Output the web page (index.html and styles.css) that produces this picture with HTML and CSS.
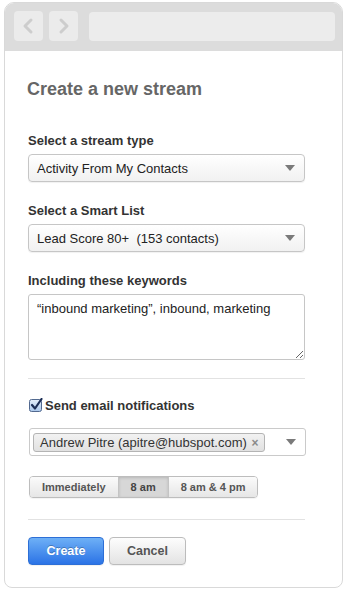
FILE: index.html
```html
<!DOCTYPE html>
<html lang="en">

<head>
    <meta charset="UTF-8">
    <title>Create a new stream</title>
    <link rel="stylesheet" href="styles.css">
</head>

<body>
    <div class="window">
        <div class="toolbar">
            <div class="nav-btn">
                <svg width="29" height="30" viewBox="0 0 29 30">
                    <path d="M17 9 L11 15 L17 21" fill="none" stroke="#cdcdcd" stroke-width="3" stroke-linecap="round" stroke-linejoin="round" />
                </svg>
            </div>
            <div class="nav-btn">
                <svg width="29" height="30" viewBox="0 0 29 30">
                    <path d="M12 9 L18 15 L12 21" fill="none" stroke="#cdcdcd" stroke-width="3" stroke-linecap="round" stroke-linejoin="round" />
                </svg>
            </div>
            <div class="address"></div>
        </div>

        <div class="content">
            <h1>Create a new stream</h1>

            <div class="field">
                <label>Select a stream type</label>
                <div class="select">
                    <span>Activity From My Contacts</span>
                    <svg class="caret" width="10" height="6" viewBox="0 0 10 6"><path d="M0 0 H10 L5 6 Z" fill="#7a7a7a" /></svg>
                </div>
            </div>

            <div class="field">
                <label>Select a Smart List</label>
                <div class="select">
                    <span>Lead Score 80+&nbsp; (153 contacts)</span>
                    <svg class="caret" width="10" height="6" viewBox="0 0 10 6"><path d="M0 0 H10 L5 6 Z" fill="#7a7a7a" /></svg>
                </div>
            </div>

            <div class="field last">
                <label>Including these keywords</label>
                <textarea class="keywords">“inbound marketing”, inbound, marketing</textarea>
            </div>

            <hr class="divider">

            <div class="check-row">
                <svg class="checkbox" width="14" height="14" viewBox="0 0 14 14">
                    <defs>
                        <linearGradient id="cb" x1="0" y1="0" x2="0" y2="1">
                            <stop offset="0" stop-color="#e3edf9" />
                            <stop offset="1" stop-color="#a9c6ea" />
                        </linearGradient>
                    </defs>
                    <rect x="0.5" y="1.5" width="12" height="12" rx="2" fill="url(#cb)" stroke="#52698f" />
                    <path d="M3 7 L6 10.5 L12.5 1" fill="none" stroke="#1b2d55" stroke-width="2.2" stroke-linecap="round" stroke-linejoin="round" />
                </svg>
                <span>Send email notifications</span>
            </div>

            <div class="recipients">
                <span class="tag">Andrew Pitre (apitre@hubspot.com) <b class="tag-x">×</b></span>
                <svg class="caret" width="10" height="6" viewBox="0 0 10 6"><path d="M0 0 H10 L5 6 Z" fill="#7a7a7a" /></svg>
            </div>

            <div class="segments">
                <span class="seg">Immediately</span>
                <span class="seg active">8 am</span>
                <span class="seg">8 am &amp; 4 pm</span>
            </div>

            <hr class="divider bottom">

            <div class="actions">
                <button class="btn primary">Create</button>
                <button class="btn">Cancel</button>
            </div>
        </div>
    </div>
</body>

</html>
```

FILE: styles.css
```css
body {
    margin: 0;
    background: #fff;
    font-family: 'Liberation Sans', Arial, sans-serif;
    color: #333;
}

.window {
    margin: 2px 4px 0 4px;
    height: 584px;
    border: 1px solid #d9d9d9;
    border-radius: 10px 10px 8px 8px;
    overflow: hidden;
    background: #fff;
}

/* Browser chrome */
.toolbar {
    height: 48px;
    box-sizing: border-box;
    padding: 8px 7px 0 9px;
    background: #dcdcdc;
    display: flex;
    gap: 6px;
}

.nav-btn {
    width: 29px;
    height: 30px;
    border-radius: 4px;
    background: #ebebeb;
}

.nav-btn svg {
    display: block;
}

.address {
    flex: 1;
    height: 29px;
    margin: 1px 0 0 5px;
    border-radius: 4px;
    background: #ececec;
}

/* Form */
.content {
    padding: 27px 0 0 22px;
}

h1 {
    margin: 0 0 33px 0;
    font-size: 18px;
    line-height: 22px;
    font-weight: bold;
    color: #666;
}

.field {
    width: 277px;
    margin-left: 1px;
    margin-bottom: 21px;
}

.field.last {
    margin-bottom: 0;
}

.field label {
    display: block;
    font-size: 13px;
    line-height: 16px;
    font-weight: bold;
    color: #333;
    margin-bottom: 5px;
}

.select {
    height: 28px;
    box-sizing: border-box;
    border: 1px solid #c6c6c6;
    border-radius: 4px;
    background: linear-gradient(#ffffff, #f1f1f1);
    box-shadow: 0 1px 1px rgba(0, 0, 0, 0.06);
    display: flex;
    align-items: center;
    justify-content: space-between;
    padding: 0 9px 0 8px;
    font-size: 13px;
    color: #222;
}

.keywords {
    display: block;
    width: 277px;
    height: 66px;
    box-sizing: border-box;
    margin: 0;
    padding: 6px 8px;
    border: 1px solid #c6c6c6;
    border-radius: 3px;
    font-family: 'Liberation Sans', Arial, sans-serif;
    font-size: 13px;
    line-height: 16px;
    color: #222;
    resize: both;
}

.divider {
    width: 277px;
    margin: 18px 0 0 1px;
    border: 0;
    border-top: 1px solid #e2e2e2;
}

.divider.bottom {
    margin-top: 21px;
}

.check-row {
    margin: 18px 0 0 2px;
    height: 16px;
    display: flex;
    align-items: center;
    gap: 2px;
    font-size: 13px;
    font-weight: bold;
    color: #333;
}

.checkbox {
    display: block;
}

.recipients {
    width: 277px;
    height: 28px;
    box-sizing: border-box;
    margin: 15px 0 0 2px;
    border: 1px solid #cacaca;
    border-radius: 3px;
    background: #fff;
    display: flex;
    align-items: center;
    justify-content: space-between;
    padding: 0 9px 0 3px;
}

.tag {
    height: 19px;
    box-sizing: border-box;
    border: 1px solid #b4b4b4;
    border-radius: 3px;
    background: linear-gradient(#f2f2f2, #e1e1e1);
    padding: 0 6px;
    font-size: 13px;
    line-height: 17px;
    color: #333;
}

.tag-x {
    font-size: 12px;
    color: #8a8a8a;
    margin-left: 1px;
}

.segments {
    display: inline-flex;
    margin: 20px 0 0 2px;
    height: 22px;
    border: 1px solid #bdbdbd;
    border-radius: 4px;
    overflow: hidden;
    box-sizing: border-box;
    box-shadow: 0 1px 1px rgba(0, 0, 0, 0.05);
}

.seg {
    padding: 0 12px;
    font-size: 11px;
    line-height: 20px;
    font-weight: bold;
    color: #555;
    background: linear-gradient(#fbfbfb, #e6e6e6);
    border-left: 1px solid #c4c4c4;
}

.seg:first-child {
    border-left: 0;
}

.seg.active {
    background: #d7d7d7;
    box-shadow: inset 0 1px 3px rgba(0, 0, 0, 0.15);
    color: #444;
}

.actions {
    margin: 17px 0 0 1px;
    display: flex;
    gap: 5px;
}

.btn {
    width: 77px;
    height: 28px;
    border: 1px solid #bcbcbc;
    border-radius: 4px;
    background: linear-gradient(#fdfdfd, #e3e3e3);
    font-family: 'Liberation Sans', Arial, sans-serif;
    font-size: 12.5px;
    font-weight: bold;
    color: #555;
    padding: 0;
    box-shadow: 0 1px 1px rgba(0, 0, 0, 0.06);
}

.btn.primary {
    width: 76px;
    border-color: #2d6fd6;
    background: linear-gradient(#6eb0f6, #2b73e6);
    color: #fff;
    text-shadow: 0 -1px 0 rgba(0, 0, 0, 0.25);
}
```
